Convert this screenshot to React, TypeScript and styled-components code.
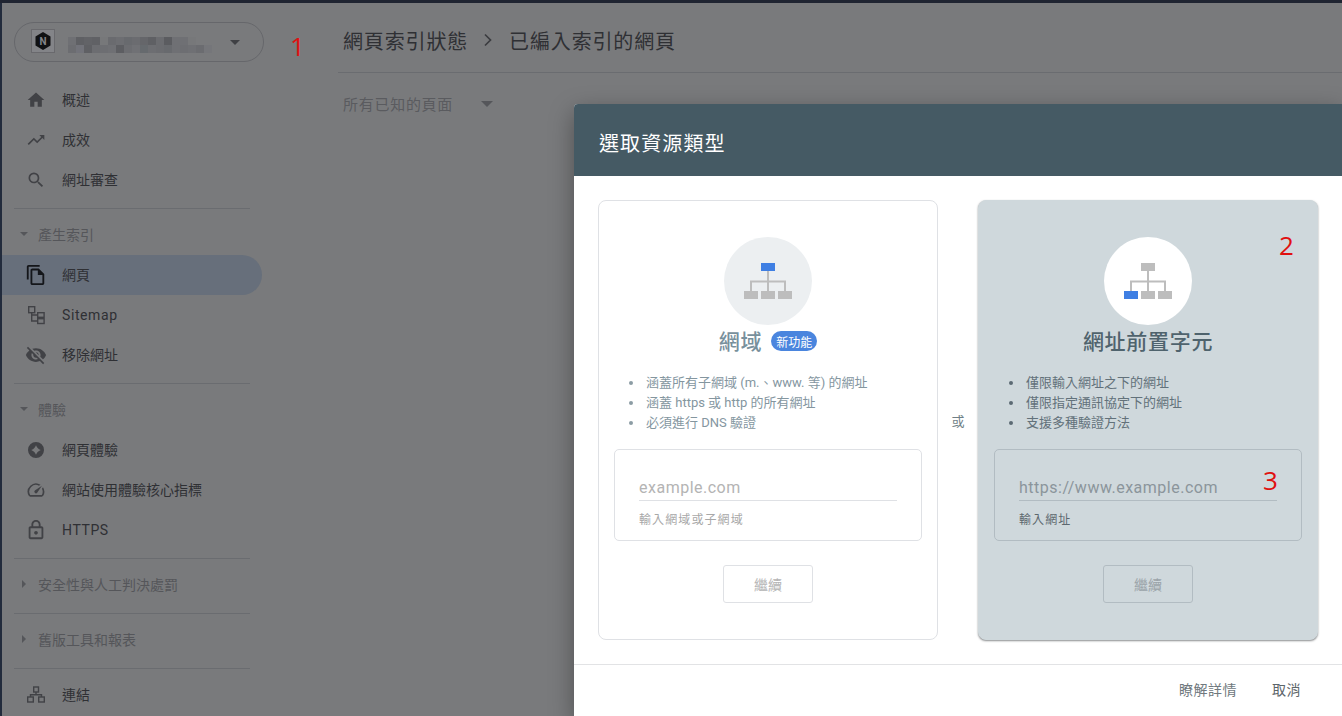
import React from "react";
import styled, { createGlobalStyle } from "styled-components";
import {
  MdHome,
  MdTrendingUp,
  MdSearch,
  MdOutlineFileCopy,
  MdVisibilityOff,
  MdOutlineSpeed,
  MdOutlineLock,
} from "react-icons/md";

const Global = createGlobalStyle`
  html, body { margin: 0; padding: 0; background: #797a7c; }
  body { font-family: Roboto, "Noto Sans CJK TC", sans-serif; overflow: hidden; }
  * { box-sizing: border-box; }
`;

const Page = styled.div`
  position: relative;
  width: 1342px;
  height: 716px;
  overflow: hidden;
  display: flex;
  flex-direction: column;
  background: #797a7c;
`;
const TopStrip = styled.div`
  height: 3px;
  flex: none;
  background: #1f2431;
`;
const Body = styled.div`
  flex: 1;
  display: flex;
  min-height: 0;
`;
const LeftStrip = styled.div`
  width: 2px;
  flex: none;
  background: #222b3c;
`;
const Sidebar = styled.nav`
  width: 336px;
  flex: none;
  padding-top: 19px;
`;
const Selector = styled.div`
  margin-left: 12px;
  margin-bottom: 18px;
  width: 250px;
  height: 40px;
  border: 1px solid #66676b;
  border-radius: 20px;
  display: flex;
  align-items: center;
  padding-left: 16px;
`;
const LogoBox = styled.div`
  width: 24px;
  height: 24px;
  flex: none;
  margin-bottom: 2px;
  border: 1px solid #69696d;
  background: #838488;
  display: flex;
  align-items: center;
  justify-content: center;
`;
const Blur = styled.svg`
  margin: 6px 0 0 13px;
  flex: none;
`;
const Caret = styled.span<{ $size?: number; $color?: string }>`
  display: inline-block;
  width: 0;
  height: 0;
  border-left: ${(p) => p.$size ?? 6}px solid transparent;
  border-right: ${(p) => p.$size ?? 6}px solid transparent;
  border-top: ${(p) => p.$size ?? 6}px solid ${(p) => p.$color ?? "#3f4044"};
`;
const SelectorCaret = styled(Caret)`
  margin-left: 18px;
`;
const Row = styled.div<{ $active?: boolean }>`
  height: 40px;
  width: 260px;
  display: flex;
  align-items: center;
  padding-left: 22px;
  gap: 14px;
  font-size: 14px;
  color: #2f3034;
  background: ${(p) => (p.$active ? "#676f7b" : "transparent")};
  border-radius: 0 20px 20px 0;
`;
const IconSlot = styled.span<{ $color?: string }>`
  width: 24px;
  height: 24px;
  flex: none;
  display: flex;
  align-items: center;
  justify-content: center;
  color: ${(p) => p.$color ?? "#414246"};
`;
const Label = styled.span<{ $latin?: boolean }>`
  letter-spacing: ${(p) => (p.$latin ? "0.6px" : "0")};
  padding-bottom: ${(p) => (p.$latin ? "0" : "2px")};
`;
const Group = styled.div`
  margin-top: 8px;
  margin-left: 12px;
  border-top: 1px solid #6a6c70;
  width: 236px;
  height: 0;
`;
const SectionHead = styled.div`
  margin-top: 6px;
  height: 40px;
  display: flex;
  align-items: center;
  padding: 0 0 2px 18px;
  font-size: 14px;
  color: #55565a;
`;
const SectionIcon = styled.span`
  width: 18px;
  flex: none;
  display: flex;
  align-items: center;
`;
const SideCaret = styled.span`
  width: 0;
  height: 0;
  margin-left: 2px;
  border-top: 4px solid transparent;
  border-bottom: 4px solid transparent;
  border-left: 4px solid #55565a;
`;
const Spacer = styled.div`
  height: 6px;
`;
const Main = styled.main`
  flex: 1;
  min-width: 0;
`;
const Crumbs = styled.header`
  height: 70px;
  border-bottom: 1px solid #6a6c70;
  display: flex;
  align-items: center;
  padding-left: 5px;
  padding-bottom: 1px;
  padding-top: 6px;
  font-size: 20px;
  letter-spacing: 0.85px;
  color: #2f3034;
`;
const CrumbSep = styled.span`
  display: flex;
  margin: 0 16px 0 15px;
  color: #3b3c40;
`;
const Filter = styled.div`
  margin: 20px 0 0 5px;
  display: flex;
  align-items: center;
  gap: 28px;
  font-size: 15px;
  letter-spacing: 0.72px;
  color: #5a5b5f;
`;
const Mark = styled.span<{ $x: number; $y: number; $size?: number }>`
  position: absolute;
  left: ${(p) => p.$x}px;
  top: ${(p) => p.$y}px;
  font-family: "Open Sans", sans-serif;
  font-size: ${(p) => p.$size ?? 26}px;
  line-height: 1;
  color: #e01010;
`;
const Dialog = styled.section`
  position: absolute;
  left: 574px;
  top: 104px;
  right: 0;
  bottom: 0;
  background: #fff;
  border-radius: 4px 0 0 0;
  box-shadow: 0 8px 24px rgba(0, 0, 0, 0.35);
  display: flex;
  flex-direction: column;
`;
const DialogHead = styled.h2`
  margin: 0;
  height: 72px;
  flex: none;
  background: #455a64;
  color: #fff;
  border-radius: 4px 0 0 0;
  display: flex;
  align-items: center;
  padding-left: 25px;
  padding-top: 4px;
  font-size: 20px;
  letter-spacing: 1.1px;
  font-weight: 400;
`;
const Choices = styled.div`
  display: flex;
  padding: 24px;
  height: 488px;
  flex: none;
`;
const Or = styled.div`
  width: 40px;
  flex: none;
  display: flex;
  align-items: center;
  justify-content: center;
  font-size: 13px;
  color: #6f7f87;
`;
const Card = styled.article<{ $selected?: boolean }>`
  width: 340px;
  height: 440px;
  flex: none;
  border-radius: 8px;
  border: 1px solid ${(p) => (p.$selected ? "#cfd8dc" : "#dfe1e5")};
  background: ${(p) => (p.$selected ? "#cfd8dc" : "#fff")};
  box-shadow: ${(p) => (p.$selected ? "0 1px 2px rgba(60,64,67,.6)" : "none")};
  padding-top: 36px;
  display: flex;
  flex-direction: column;
  align-items: center;
`;
const Circle = styled.div<{ $selected?: boolean }>`
  width: 88px;
  height: 88px;
  flex: none;
  border-radius: 50%;
  background: ${(p) => (p.$selected ? "#fff" : "#eceff1")};
  display: flex;
  align-items: center;
  justify-content: center;
`;
const CardTitle = styled.h3<{ $selected?: boolean }>`
  margin: 0;
  height: 32px;
  display: flex;
  align-items: center;
  justify-content: center;
  gap: 9px;
  font-size: 21px;
  letter-spacing: 0.7px;
  font-weight: 500;
  color: ${(p) => (p.$selected ? "#4f636d" : "#78909c")};
`;
const TitleText = styled.span`
  padding-bottom: 2px;
`;
const Badge = styled.span`
  width: 46px;
  height: 20px;
  border-radius: 10px;
  background: #4a85de;
  color: #fff;
  font-size: 12px;
  letter-spacing: 0;
  font-weight: 400;
  display: flex;
  align-items: center;
  justify-content: center;
`;
const Bullets = styled.ul<{ $selected?: boolean }>`
  margin: 16px 0 0;
  padding: 0 0 0 30px;
  width: 100%;
  list-style: none;
  font-size: 13px;
  line-height: 20px;
  color: ${(p) => (p.$selected ? "#62717a" : "#84969f")};
`;
const Bullet = styled.li<{ $selected?: boolean }>`
  display: flex;
  align-items: center;
  gap: 13px;
  &::before {
    content: "";
    width: 4px;
    height: 4px;
    flex: none;
    border-radius: 50%;
    background: ${(p) => (p.$selected ? "#5b6a73" : "#8c9ca4")};
  }
`;
const InputBox = styled.div<{ $selected?: boolean }>`
  margin-top: 16px;
  width: 308px;
  height: 92px;
  flex: none;
  border-radius: 5px;
  border: 1px solid ${(p) => (p.$selected ? "#b2bcc2" : "#dfe1e5")};
  padding: 26px 24px 0;
`;
const Field = styled.div<{ $selected?: boolean }>`
  height: 25px;
  border-bottom: 1px solid ${(p) => (p.$selected ? "#b2bcc2" : "#dfe1e5")};
  font-size: 16px;
  line-height: 24px;
  letter-spacing: 0.5px;
  color: ${(p) => (p.$selected ? "#8b959b" : "#b4b4b4")};
`;
const Hint = styled.div<{ $selected?: boolean }>`
  margin-top: 10px;
  font-size: 12px;
  line-height: 18px;
  letter-spacing: 1.1px;
  color: ${(p) => (p.$selected ? "#5d686e" : "#a8a8a8")};
`;
const Continue = styled.div<{ $selected?: boolean }>`
  margin-top: 24px;
  width: 90px;
  height: 38px;
  flex: none;
  border-radius: 3px;
  border: 1px solid ${(p) => (p.$selected ? "#b2bcc2" : "#dfe1e5")};
  display: flex;
  align-items: center;
  justify-content: center;
  font-size: 14px;
  color: ${(p) => (p.$selected ? "#9aa3a8" : "#b4b4b4")};
`;
const Footer = styled.footer`
  flex: 1;
  border-top: 1px solid #e2e3e5;
  display: flex;
  align-items: center;
  justify-content: flex-end;
  gap: 35px;
  padding: 0 41px 4px 0;
  font-size: 14px;
  letter-spacing: 0.5px;
  color: #70797e;
`;
const CancelLink = styled.span`
  color: #5c6569;
`;

const Tree = ({ active }: { active: "top" | "left" }) => (
  <svg width="48" height="36" viewBox="0 0 48 36" aria-hidden>
    <path d="M24 8v20M7 28v-9.5h34V28" fill="none" stroke="#bdbdbd" strokeWidth="2" />
    <rect x="17" y="0" width="14" height="8" fill={active === "top" ? "#3f7fe3" : "#bdbdbd"} />
    <rect x="0" y="28" width="14" height="8" fill={active === "left" ? "#3f7fe3" : "#bdbdbd"} />
    <rect x="17" y="28" width="14" height="8" fill="#bdbdbd" />
    <rect x="34" y="28" width="14" height="8" fill="#bdbdbd" />
  </svg>
);

const mosaic = [
  ["#6f7074", "#5f6064", "#626367", "#606165", "#77787a", "#6a6b6f", "#6d6e72", "#686a6e", "#6b6c70", "#65666a", "#5f6064", "#6b6c70", "#5b5c60", "#6f7074", "#6f7074", "#77787a", "#797a7c", "#797a7c"],
  ["#6c6d71", "#72737a", "#5f6064", "#6c6d71", "#6d6e72", "#6f7074", "#5d5e62", "#6c6d71", "#707175", "#666a6e", "#6d6e72", "#6b6c70", "#686a6e", "#6f7074", "#6d6e72", "#6f7074", "#6b6c70", "#75767a"],
];

const Mosaic = () => (
  <Blur width="144" height="16" viewBox="0 0 144 16" aria-hidden>
    {mosaic.map((row, y) =>
      row.map((c, x) => <rect key={`${x}-${y}`} x={x * 8} y={y * 8} width="8" height="8" fill={c} />)
    )}
  </Blur>
);

const Logo = () => (
  <svg width="16" height="18" viewBox="0 0 16 18" aria-hidden>
    <path d="M8 0l7.5 4.4v9.2L8 18 .5 13.6V4.4z" fill="#101113" />
    <text x="8" y="12.6" textAnchor="middle" fontSize="10" fontWeight="700" fontFamily="Roboto, sans-serif" fill="#838488">N</text>
  </svg>
);

const SitemapIcon = () => (
  <svg width="24" height="24" viewBox="0 0 24 24" fill="none" stroke="currentColor" strokeWidth="1.4" aria-hidden>
    <rect x="4.7" y="3.7" width="6" height="6" />
    <rect x="13.7" y="9.7" width="6.4" height="4.6" />
    <rect x="13.7" y="15.7" width="6.4" height="4.8" />
    <path d="M7.7 9.7v8.3h6M7.7 12h6" />
  </svg>
);
const ExperienceIcon = () => (
  <svg width="24" height="24" viewBox="0 0 24 24" aria-hidden>
    <path
      fillRule="evenodd"
      fill="currentColor"
      d="M12 4a8 8 0 1 1 0 16 8 8 0 0 1 0-16zm0 3.2c-.9 2.4-2 3.6-4.8 4.8 2.8 1.2 3.9 2.4 4.8 4.8.9-2.4 2-3.6 4.8-4.8-2.8-1.2-3.9-2.4-4.8-4.8z"
    />
  </svg>
);
const LinksIcon = () => (
  <svg width="24" height="24" viewBox="0 0 24 24" fill="none" stroke="currentColor" strokeWidth="1.4" aria-hidden>
    <rect x="9.7" y="4" width="4.8" height="5" />
    <rect x="3.7" y="14" width="5.6" height="5" />
    <rect x="14.7" y="14" width="5.6" height="5" />
    <path d="M12 9v2.7M6.5 14v-2.3h11V14" />
  </svg>
);

type Item = { icon: React.ReactNode; label: string; active?: boolean; latin?: boolean };

const NavRow = ({ icon, label, active, latin }: Item) => (
  <Row $active={active}>
    <IconSlot $color={active ? "#14161a" : undefined}>{icon}</IconSlot>
    <Label $latin={latin}>{label}</Label>
  </Row>
);

const Head = ({ label, open }: { label: string; open?: boolean }) => (
  <SectionHead>
    <SectionIcon>{open ? <Caret $size={4} $color="#55565a" /> : <SideCaret />}</SectionIcon>
    {label}
  </SectionHead>
);

type ChoiceProps = {
  selected?: boolean;
  tree: "top" | "left";
  title: string;
  badge?: string;
  points: string[];
  placeholder: string;
  hint: string;
};

const Choice = ({ selected, tree, title, badge, points, placeholder, hint }: ChoiceProps) => (
  <Card $selected={selected}>
    <Circle $selected={selected}>
      <Tree active={tree} />
    </Circle>
    <CardTitle $selected={selected}>
      <TitleText>{title}</TitleText>
      {badge && <Badge>{badge}</Badge>}
    </CardTitle>
    <Bullets $selected={selected}>
      {points.map((p) => (
        <Bullet key={p} $selected={selected}>{p}</Bullet>
      ))}
    </Bullets>
    <InputBox $selected={selected}>
      <Field $selected={selected}>{placeholder}</Field>
      <Hint $selected={selected}>{hint}</Hint>
    </InputBox>
    <Continue $selected={selected}>繼續</Continue>
  </Card>
);

export default function App() {
  return (
    <Page>
      <Global />
      <TopStrip />
      <Body>
        <LeftStrip />
        <Sidebar>
          <Selector>
            <LogoBox>
              <Logo />
            </LogoBox>
            <Mosaic />
            <SelectorCaret $size={5} />
          </Selector>
          <NavRow icon={<MdHome size={20} />} label="概述" />
          <NavRow icon={<MdTrendingUp size={20} />} label="成效" />
          <NavRow icon={<MdSearch size={20} />} label="網址審查" />
          <Group />
          <Head label="產生索引" open />
          <NavRow icon={<MdOutlineFileCopy size={22} />} label="網頁" active />
          <NavRow icon={<SitemapIcon />} label="Sitemap" latin />
          <NavRow icon={<MdVisibilityOff size={22} />} label="移除網址" />
          <Group />
          <Head label="體驗" open />
          <NavRow icon={<ExperienceIcon />} label="網頁體驗" />
          <NavRow icon={<MdOutlineSpeed size={20} />} label="網站使用體驗核心指標" />
          <NavRow icon={<MdOutlineLock size={22} />} label="HTTPS" latin />
          <Group />
          <Head label="安全性與人工判決處罰" />
          <Group />
          <Head label="舊版工具和報表" />
          <Group />
          <Spacer />
          <NavRow icon={<LinksIcon />} label="連結" />
        </Sidebar>
        <Main>
          <Crumbs>
            網頁索引狀態
            <CrumbSep>
              <svg width="10" height="14" viewBox="0 0 10 14" aria-hidden>
                <path d="M2 1.5L7.5 7 2 12.5" fill="none" stroke="currentColor" strokeWidth="1.7" />
              </svg>
            </CrumbSep>
            已編入索引的網頁
          </Crumbs>
          <Filter>
            所有已知的頁面
            <Caret $size={6} $color="#55565a" />
          </Filter>
        </Main>
      </Body>
      <Mark $x={290} $y={33}>1</Mark>
      <Dialog>
        <DialogHead>選取資源類型</DialogHead>
        <Choices>
          <Choice
            tree="top"
            title="網域"
            badge="新功能"
            points={["涵蓋所有子網域 (m.、www. 等) 的網址", "涵蓋 https 或 http 的所有網址", "必須進行 DNS 驗證"]}
            placeholder="example.com"
            hint="輸入網域或子網域"
          />
          <Or>或</Or>
          <Choice
            selected
            tree="left"
            title="網址前置字元"
            points={["僅限輸入網址之下的網址", "僅限指定通訊協定下的網址", "支援多種驗證方法"]}
            placeholder="https://www.example.com"
            hint="輸入網址"
          />
        </Choices>
        <Footer>
          <span>瞭解詳情</span>
          <CancelLink>取消</CancelLink>
        </Footer>
      </Dialog>
      <Mark $x={1279} $y={232}>2</Mark>
      <Mark $x={1263} $y={467}>3</Mark>
    </Page>
  );
}
